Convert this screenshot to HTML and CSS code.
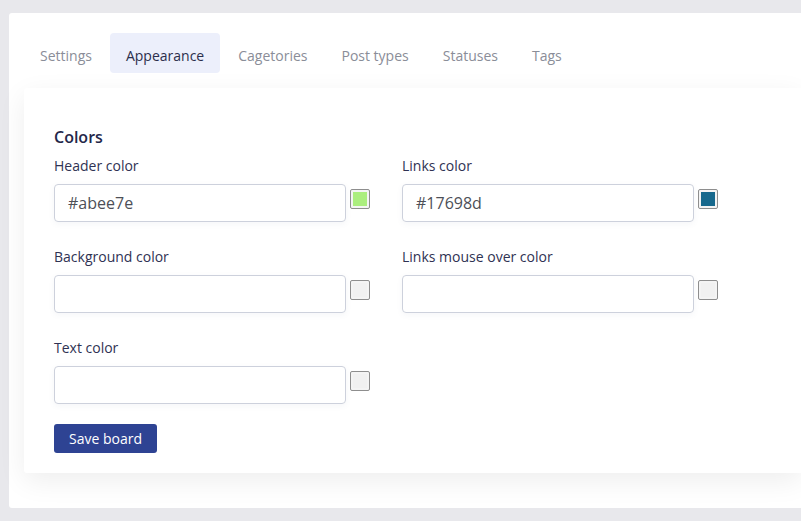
FILE: index.html
```html
<!DOCTYPE html>
<html>
<head>
<meta charset="utf-8">
<link rel="stylesheet" href="styles.css">
</head>
<body>
<div class="page">
  <div class="panel">
    <nav class="tabs">
      <span class="tab">Settings</span>
      <span class="tab active">Appearance</span>
      <span class="tab">Cagetories</span>
      <span class="tab">Post types</span>
      <span class="tab">Statuses</span>
      <span class="tab">Tags</span>
    </nav>
    <div class="card">
      <h3 class="heading">Colors</h3>
      <div class="grid">
        <div class="field">
          <label class="label">Header color</label>
          <div class="row">
            <div class="input">#abee7e</div>
            <span class="swatch"><span class="fill" style="background:#abee7e"></span></span>
          </div>
        </div>
        <div class="field">
          <label class="label">Links color</label>
          <div class="row">
            <div class="input">#17698d</div>
            <span class="swatch"><span class="fill" style="background:#17698d"></span></span>
          </div>
        </div>
        <div class="field">
          <label class="label">Background color</label>
          <div class="row">
            <div class="input"></div>
            <span class="swatch"><span class="fill"></span></span>
          </div>
        </div>
        <div class="field">
          <label class="label">Links mouse over color</label>
          <div class="row">
            <div class="input"></div>
            <span class="swatch"><span class="fill"></span></span>
          </div>
        </div>
        <div class="field">
          <label class="label">Text color</label>
          <div class="row">
            <div class="input"></div>
            <span class="swatch"><span class="fill"></span></span>
          </div>
        </div>
      </div>
      <button class="btn">Save board</button>
    </div>
  </div>
</div>
</body>
</html>
```
FILE: styles.css
```css
html, body {
  margin: 0;
  padding: 0;
  background: #e8e8ec;
  overflow: hidden;
  font-family: "Open Sans", "Liberation Sans", sans-serif;
}
.page {
  padding: 13px 0 0 9px;
  height: 521px;
  box-sizing: border-box;
}
.panel {
  background: #ffffff;
  border-radius: 3px 0 0 3px;
  padding: 20px 0 35px 15px;
  box-sizing: border-box;
}
.tabs {
  display: flex;
  gap: 2px;
}
.tab {
  display: block;
  height: 40px;
  box-sizing: border-box;
  padding: 6px 16px 0 16px;
  line-height: 34px;
  font-size: 14px;
  color: #8a8d98;
  border-radius: 4px;
}
.tab.active {
  background: #eceffb;
  color: #2b2e4c;
}
.card {
  margin-top: 15px;
  background: #ffffff;
  border-radius: 3px 0 0 3px;
  padding: 38px 30px 20px 30px;
  box-shadow: 0 8px 28px rgba(0, 0, 0, 0.07);
}
.heading {
  margin: 0;
  font-size: 16px;
  line-height: 22px;
  font-weight: 600;
  color: #24274a;
}
.grid {
  margin-top: 8px;
  display: grid;
  grid-template-columns: 348px 348px;
  row-gap: 25px;
}
.field {
  display: flex;
  flex-direction: column;
}
.label {
  font-size: 14px;
  line-height: 20px;
  color: #2f3253;
  margin-bottom: 8px;
}
.row {
  display: flex;
  align-items: flex-start;
  gap: 4px;
}
.input {
  width: 292px;
  height: 38px;
  box-sizing: border-box;
  border: 1px solid #cdd1dc;
  border-radius: 4px;
  padding: 0 13px;
  font-size: 16px;
  line-height: 36px;
  color: #4d4f57;
  box-shadow: 0 2px 6px rgba(60, 70, 120, 0.05);
}
.swatch {
  margin-top: 5px;
  width: 20px;
  height: 20px;
  box-sizing: border-box;
  border: 1px solid #8e8e8e;
  border-radius: 2px;
  padding: 2px;
  display: flex;
  background: #f4f4f4;
}
.fill {
  flex: 1;
  background: #f1f1f1;
}
.btn {
  display: block;
  margin-top: 20px;
  height: 29px;
  padding: 0 15px;
  background: #2e4393;
  color: #ffffff;
  border: none;
  border-radius: 3px;
  font-family: "Open Sans", "Liberation Sans", sans-serif;
  font-size: 14px;
  line-height: 29px;
}
```
